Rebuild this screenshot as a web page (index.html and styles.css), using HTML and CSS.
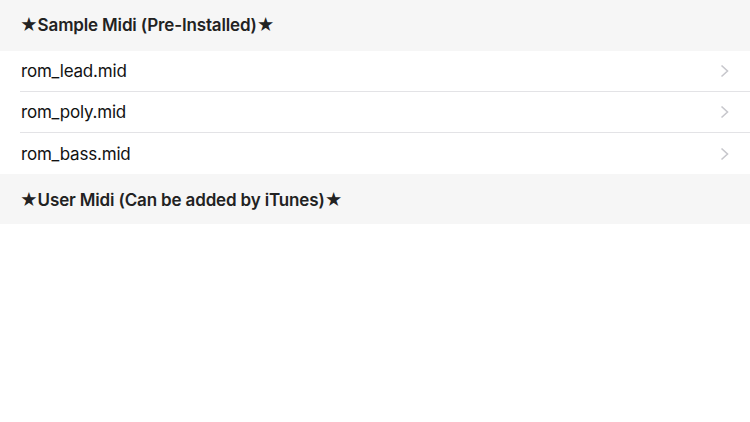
FILE: index.html
```html
<!DOCTYPE html>
<html>
<head>
<meta charset="utf-8">
<link rel="stylesheet" href="styles.css">
</head>
<body>
<div class="list">
  <div class="section-header">★Sample Midi (Pre-Installed)★</div>
  <div class="row"><span class="label">rom_lead.mid</span><svg class="chev" width="9" height="14" viewBox="0 0 9 14"><path d="M1.5 1.5 L7.5 7 L1.5 12.5" fill="none" stroke="#c7c7cc" stroke-width="1.6"/></svg></div>
  <div class="row"><span class="label">rom_poly.mid</span><svg class="chev" width="9" height="14" viewBox="0 0 9 14"><path d="M1.5 1.5 L7.5 7 L1.5 12.5" fill="none" stroke="#c7c7cc" stroke-width="1.6"/></svg></div>
  <div class="row last"><span class="label">rom_bass.mid</span><svg class="chev" width="9" height="14" viewBox="0 0 9 14"><path d="M1.5 1.5 L7.5 7 L1.5 12.5" fill="none" stroke="#c7c7cc" stroke-width="1.6"/></svg></div>
  <div class="section-header second">★User Midi (Can be added by iTunes)★</div>
</div>
</body>
</html>
```
FILE: styles.css
```css
html, body {
  margin: 0;
  padding: 0;
  background: #ffffff;
}
body {
  width: 750px;
  height: 422px;
  overflow: hidden;
  font-family: "Inter", "Noto Sans", sans-serif;
  color: #111;
}
.list {
  display: flex;
  flex-direction: column;
}
.section-header {
  height: 51px;
  background: #f6f6f6;
  display: flex;
  align-items: center;
  padding-left: 20px;
  padding-bottom: 1px;
  box-sizing: border-box;
  font-size: 17px;
  font-weight: 600;
  letter-spacing: -0.15px;
  color: #222;
}
.section-header.second {
  height: 50px;
  padding-bottom: 0;
  padding-top: 1px;
}
.row {
  height: 41px;
  margin-left: 20px;
  padding-right: 21px;
  display: flex;
  align-items: center;
  justify-content: space-between;
  border-bottom: 1px solid #e3e3e6;
  box-sizing: border-box;
  font-size: 17px;
  letter-spacing: -0.2px;
}
.row.last {
  border-bottom: none;
}
.label {
  padding-left: 1px;
}
.chev {
  display: block;
}
```
